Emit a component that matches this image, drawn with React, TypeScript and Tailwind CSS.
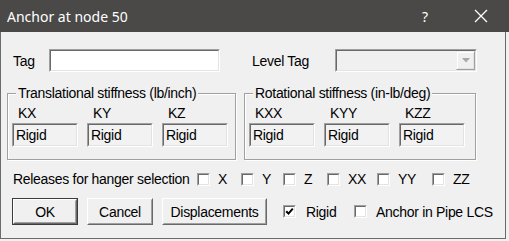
const DIALOG_FONT = "font-['Liberation_Sans',Arial,sans-serif] text-[14px] tracking-[-0.3px]";

function Sunken({ className, inner, children }: { className: string; inner: string; children?: React.ReactNode }) {
  return (
    <div className={`border border-t-[#a0a0a0] border-l-[#a0a0a0] border-b-white border-r-white ${className}`}>
      <div className={`h-full w-full border border-t-[#696969] border-l-[#696969] border-b-[#e3e3e3] border-r-[#e3e3e3] ${inner}`}>
        {children}
      </div>
    </div>
  );
}

function CheckBox({ checked }: { checked?: boolean }) {
  return (
    <span className="flex h-[13px] w-[13px] shrink-0 border border-t-[#a0a0a0] border-l-[#a0a0a0] border-b-white border-r-white">
      <span className="flex h-full w-full items-center justify-center border border-t-[#696969] border-l-[#696969] border-b-[#e3e3e3] border-r-[#e3e3e3] bg-white">
        {checked && (
          <svg width="9" height="9" viewBox="0 0 9 9">
            <path d="M1.2 4.2 L3.5 6.6 L7.8 1.6" fill="none" stroke="#000" strokeWidth="2" />
          </svg>
        )}
      </span>
    </span>
  );
}

function Button({ label, width, isDefault }: { label: string; width: string; isDefault?: boolean }) {
  return (
    <div className={`h-[27px] shrink-0 ${width} ${isDefault ? 'border border-[#3c3c3c]' : ''}`}>
      <div className="h-full w-full border border-t-white border-l-white border-b-[#696969] border-r-[#696969]">
        <div className="flex h-full w-full items-center justify-center border border-t-[#f0f0f0] border-l-[#f0f0f0] border-b-[#a0a0a0] border-r-[#a0a0a0] bg-[#f0f0f0] leading-[18px]">
          {label}
        </div>
      </div>
    </div>
  );
}

function StiffnessGroup({ title, labels, width }: { title: string; labels: string[]; width: string }) {
  return (
    <div className={`h-[67px] shrink-0 ${width} border border-[#a0a0a0] shadow-[inset_1px_1px_0_#ffffff,1px_1px_0_#ffffff]`}>
      <div className="-mt-[10px] ml-[8px] w-fit bg-[#f0f0f0] px-[2px] leading-[18px]">{title}</div>
      <div className="mt-[2px] flex gap-[9px] pl-[4px]">
        {labels.map((l) => (
          <div key={l} className="w-[66px]">
            <div className="pl-[6px] leading-[18px]">{l}</div>
            <Sunken className="mt-[1px] h-[24px] w-[66px]" inner="flex items-center bg-[#f2f2f2] pl-[2px] leading-[18px]">
              Rigid
            </Sunken>
          </div>
        ))}
      </div>
    </div>
  );
}

const RELEASES = [
  { label: 'X', width: 'w-[44px]' },
  { label: 'Y', width: 'w-[42px]' },
  { label: 'Z', width: 'w-[44px]' },
  { label: 'XX', width: 'w-[50px]' },
  { label: 'YY', width: 'w-[55px]' },
  { label: 'ZZ', width: 'w-[44px]' },
];

export default function App() {
  return (
    <div className="h-[241px] w-[509px] overflow-hidden bg-[#f0f0f0]">
      {/* title bar */}
      <div className="flex h-[32px] w-[509px] items-center bg-[#4a4948] text-white font-['Noto_Sans',sans-serif]">
        <div className="pl-[7px] text-[14px]">Anchor at node 50</div>
        <div className="ml-auto flex w-[56px] justify-center text-[14px]">?</div>
        <div className="flex w-[56px] justify-center">
          <svg width="14" height="14" viewBox="0 0 14 14">
            <path d="M1 1 L13 13 M13 1 L1 13" stroke="#ffffff" strokeWidth="1.3" />
          </svg>
        </div>
      </div>

      {/* dialog body */}
      <div className={`flex h-[207px] w-[506px] flex-col whitespace-nowrap border-b border-l border-r border-[#6b6b6b] bg-[#f0f0f0] pl-[6px] text-black ${DIALOG_FONT}`}>
        <div className="mt-[17px] ml-[6px] flex h-[23px] items-center">
          <div className="w-[36px] leading-[18px]">Tag</div>
          <Sunken className="h-[23px] w-[171px]" inner="bg-white" />
          <div className="ml-[32px] w-[83px] leading-[18px]">Level Tag</div>
          <Sunken className="h-[23px] w-[142px]" inner="flex justify-end bg-[#f0f0f0]">
            <div className="h-full w-[19px] border border-t-[#f0f0f0] border-l-[#f0f0f0] border-b-[#a0a0a0] border-r-[#a0a0a0]">
              <div className="flex h-full w-full items-center justify-center border border-t-white border-l-white border-b-[#e3e3e3] border-r-[#e3e3e3] bg-[#f0f0f0]">
                <svg width="8" height="5" viewBox="0 0 8 5">
                  <path d="M0 0 L8 0 L4 4.5 Z" fill="#a8a8a8" />
                </svg>
              </div>
            </div>
          </Sunken>
        </div>

        <div className="mt-[21px] flex gap-[8px]">
          <StiffnessGroup title="Translational stiffness (lb/inch)" labels={['KX', 'KY', 'KZ']} width="w-[229px]" />
          <StiffnessGroup title="Rotational stiffness (in-lb/deg)" labels={['KXX', 'KYY', 'KZZ']} width="w-[232px]" />
        </div>

        <div className="mt-[10px] ml-[6px] flex h-[18px] items-center leading-[18px]">
          <div className="w-[184px]">Releases for hanger selection</div>
          {RELEASES.map((r) => (
            <div key={r.label} className={`flex items-center gap-[8px] ${r.width}`}>
              <CheckBox />
              <span>{r.label}</span>
            </div>
          ))}
        </div>

        <div className="mt-[10px] ml-[5px] flex items-center gap-[9px]">
          <Button label="OK" width="w-[66px]" isDefault />
          <Button label="Cancel" width="w-[66px]" />
          <Button label="Displacements" width="w-[105px]" />
          <div className="ml-[7px] flex w-[71px] shrink-0 items-center gap-[10px] leading-[18px]">
            <CheckBox checked />
            <span>Rigid</span>
          </div>
          <div className="-ml-[9px] flex items-center gap-[9px] leading-[18px]">
            <CheckBox />
            <span>Anchor in Pipe LCS</span>
          </div>
        </div>
      </div>
    </div>
  );
}
